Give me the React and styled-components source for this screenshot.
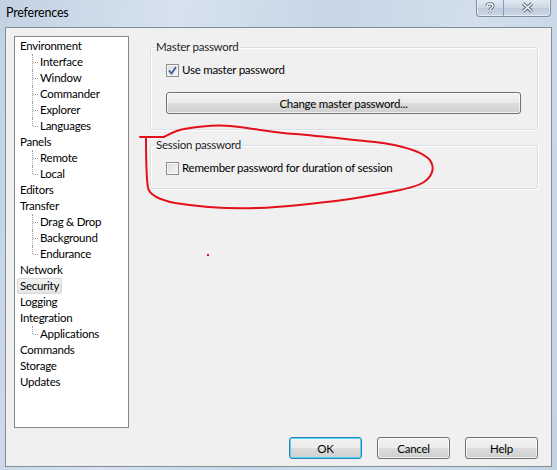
import React from "react";
import styled, { createGlobalStyle, css } from "styled-components";

const uiFont = `Lato, "Liberation Sans", Arial, sans-serif`;

const GlobalStyle = createGlobalStyle`
  html, body {
    margin: 0;
    padding: 0;
    background: #ffffff;
  }
  body {
    font-family: ${uiFont};
    font-size: 11.5px;
    letter-spacing: -0.25px;
    color: #000;
  }
`;

const Window = styled.div`
  position: relative;
  width: 557px;
  height: 470px;
  display: flex;
  flex-direction: column;
  background: linear-gradient(100deg, #c2d2e3 0%, #d6e2ee 28%, #c7d6e6 52%, #d2deeb 75%, #c4d3e4 100%);
  overflow: hidden;
`;

const TitleBar = styled.div`
  height: 27px;
  flex: none;
  display: flex;
  align-items: flex-start;
  justify-content: space-between;
`;

const Caption = styled.div`
  padding: 5px 0 0 6px;
  font-family: ${uiFont};
  font-size: 12.5px;
  letter-spacing: -0.2px;
  line-height: 16px;
  color: #000;
`;

const CaptionButtons = styled.div`
  display: flex;
  height: 17px;
  margin: -1px 6px 0 0;
  border: 1px solid #7d8ea3;
  border-top: none;
  border-radius: 0 0 4px 4px;
  overflow: hidden;
  background: linear-gradient(#e4ebf3, #cbd8e6 50%, #bccbdc 51%, #c9d6e5);
  box-shadow: inset 0 0 0 1px rgba(255, 255, 255, 0.5);
`;

const CaptionButton = styled.div`
  width: ${(p) => p.$w}px;
  display: flex;
  align-items: center;
  justify-content: center;
  & + & {
    border-left: 1px solid #8a9bb0;
  }
`;

const Client = styled.div`
  flex: 1;
  margin: 0 5px 3px 5px;
  border: 1px solid #838b95;
  background: #f0f0f0;
  display: flex;
  flex-direction: column;
  padding: 8px 0 7px 0;
`;

const Body = styled.div`
  flex: 1;
  display: flex;
  min-height: 0;
`;

const Tree = styled.div`
  width: 113px;
  height: 389px;
  margin-left: 8px;
  border: 1px solid #828790;
  background: #fff;
  padding-top: 1px;
  box-sizing: content-box;
  display: flex;
  flex-direction: column;
`;

const Row = styled.div`
  position: relative;
  height: 16px;
  line-height: 16px;
  padding-left: ${(p) => (p.$child ? 25 : 5)}px;
  white-space: nowrap;

  ${(p) =>
    p.$child &&
    css`
      &::before {
        content: "";
        position: absolute;
        left: 17px;
        top: 0;
        height: ${p.$last ? "8px" : "16px"};
        border-left: 1px dotted #a0a0a0;
      }
      &::after {
        content: "";
        position: absolute;
        left: 18px;
        top: 8px;
        width: 5px;
        border-top: 1px dotted #a0a0a0;
      }
    `}
`;

const RowLabel = styled.span`
  display: inline-block;
  height: 16px;
  line-height: 16px;
  box-sizing: border-box;
  ${(p) =>
    p.$selected &&
    css`
      margin-left: -3px;
      padding: 0 2px;
      line-height: 14px;
      border: 1px solid #d9d9d9;
      border-radius: 2px;
      background: linear-gradient(#f2f2f2, #e5e5e5);
    `}
`;

const Pane = styled.div`
  flex: 1;
  padding: 3px 13px 0 21px;
  display: flex;
  flex-direction: column;
`;

const Group = styled.fieldset`
  margin: ${(p) => p.$mt || 0}px 0 0 0;
  padding: 7px 0 ${(p) => p.$pb}px 15px;
  border: 1px solid #d5dfe5;
  border-radius: 3px;
  box-shadow: inset 1px 1px 0 #fff, 1px 1px 0 #fff;
  display: flex;
  flex-direction: column;
  min-width: 0;
`;

const Legend = styled.legend`
  padding: 0 1px;
  margin-left: -11px;
  line-height: 16px;
  color: #1e1e1e;
`;

const CheckRow = styled.label`
  display: flex;
  align-items: center;
  gap: 3px;
  height: 16px;
  line-height: 16px;
`;

const Box = styled.span`
  width: 13px;
  height: 13px;
  box-sizing: border-box;
  border: 1px solid #8f8f8f;
  background: linear-gradient(135deg, #dcdcdc, #f6f6f6);
  box-shadow: inset 0 0 0 1px #f4f4f4;
  display: flex;
  align-items: center;
  justify-content: center;
`;

const PushButton = styled.button`
  height: 22px;
  box-sizing: border-box;
  padding: 0;
  border: 1px solid ${(p) => (p.$default ? "#3c7fb1" : "#707070")};
  border-radius: 3px;
  background: linear-gradient(#f2f2f2 0%, #ebebeb 49%, #dddddd 50%, #cfcfcf 100%);
  box-shadow: inset 0 0 0 1px ${(p) => (p.$default ? "#48d8f9" : "rgba(255,255,255,0.7)")};
  font-family: ${uiFont};
  font-size: 11.5px;
  letter-spacing: -0.25px;
  color: #000;
  width: ${(p) => (p.$w ? `${p.$w}px` : "auto")};
`;

const WideButton = styled(PushButton)`
  margin: 14px 16px 0 0;
`;

const Footer = styled.div`
  flex: none;
  display: flex;
  justify-content: flex-end;
  gap: 15px;
  padding: 9px 13px 0 0;
`;

const Ink = styled.svg`
  position: absolute;
  left: 0;
  top: 0;
  pointer-events: none;
`;

const CheckMark = () => (
  <svg width="9" height="9" viewBox="0 0 9 9">
    <path d="M1 4.5 L3.5 7.5 L8 1" fill="none" stroke="#3a5c9e" strokeWidth="1.8" />
  </svg>
);

const Checkbox = ({ checked, children }) => (
  <CheckRow>
    <Box>{checked && <CheckMark />}</Box>
    {children}
  </CheckRow>
);

const tree = [
  { label: "Environment" },
  { label: "Interface", child: true },
  { label: "Window", child: true },
  { label: "Commander", child: true },
  { label: "Explorer", child: true },
  { label: "Languages", child: true, last: true },
  { label: "Panels" },
  { label: "Remote", child: true },
  { label: "Local", child: true, last: true },
  { label: "Editors" },
  { label: "Transfer" },
  { label: "Drag & Drop", child: true },
  { label: "Background", child: true },
  { label: "Endurance", child: true, last: true },
  { label: "Network" },
  { label: "Security", selected: true },
  { label: "Logging" },
  { label: "Integration" },
  { label: "Applications", child: true, last: true },
  { label: "Commands" },
  { label: "Storage" },
  { label: "Updates" },
];

export default function App() {
  return (
    <>
      <GlobalStyle />
      <Window>
        <TitleBar>
          <Caption>Preferences</Caption>
          <CaptionButtons>
            <CaptionButton $w={26}>
              <svg width="10" height="12" viewBox="0 0 10 12">
                <path
                  d="M2 4 C2 1 8 1 8 4 C8 6 5 6 5 8 M5 10 L5 11"
                  fill="none"
                  stroke="#4f5f73"
                  strokeWidth="3"
                />
                <path
                  d="M2 4 C2 1 8 1 8 4 C8 6 5 6 5 8 M5 10 L5 11"
                  fill="none"
                  stroke="#fff"
                  strokeWidth="1.4"
                />
              </svg>
            </CaptionButton>
            <CaptionButton $w={46}>
              <svg width="13" height="11" viewBox="0 0 13 11">
                <path d="M2 1.5 L11 9.5 M11 1.5 L2 9.5" stroke="#4f5f73" strokeWidth="3.4" />
                <path d="M2 1.5 L11 9.5 M11 1.5 L2 9.5" stroke="#fff" strokeWidth="1.6" />
              </svg>
            </CaptionButton>
          </CaptionButtons>
        </TitleBar>

        <Client>
          <Body>
            <Tree>
              {tree.map((item) => (
                <Row key={item.label} $child={item.child} $last={item.last}>
                  <RowLabel $selected={item.selected}>{item.label}</RowLabel>
                </Row>
              ))}
            </Tree>
            <Pane>
              <Group $pb={15}>
                <Legend>Master password</Legend>
                <Checkbox checked>Use master password</Checkbox>
                <WideButton>Change master password...</WideButton>
              </Group>
              <Group $mt={7} $pb={12}>
                <Legend>Session password</Legend>
                <Checkbox>Remember password for duration of session</Checkbox>
              </Group>
            </Pane>
          </Body>
          <Footer>
            <PushButton $default $w={73}>OK</PushButton>
            <PushButton $w={73}>Cancel</PushButton>
            <PushButton $w={73}>Help</PushButton>
          </Footer>
        </Client>

        <Ink width="557" height="470" viewBox="0 0 557 470">
          <path
            d="M140 137 L164 137 C170 134 176 130 184 129 C200 126 222 124 240 127 C262 130 275 133 295 134 C320 136 345 139 375 142 C400 145 418 150 428 158 C436 166 433 176 424 182 C416 187 408 188 400 190 C385 193 370 196 350 199 C320 203 290 207 258 208 C230 209 200 207 175 203 C160 200 150 196 148 188 C146 175 146 160 146 138"
            fill="none"
            stroke="#e3101b"
            strokeWidth="2"
            strokeLinecap="round"
          />
          <rect x="207" y="254" width="2" height="2" fill="#d0203a" />
        </Ink>
      </Window>
    </>
  );
}
